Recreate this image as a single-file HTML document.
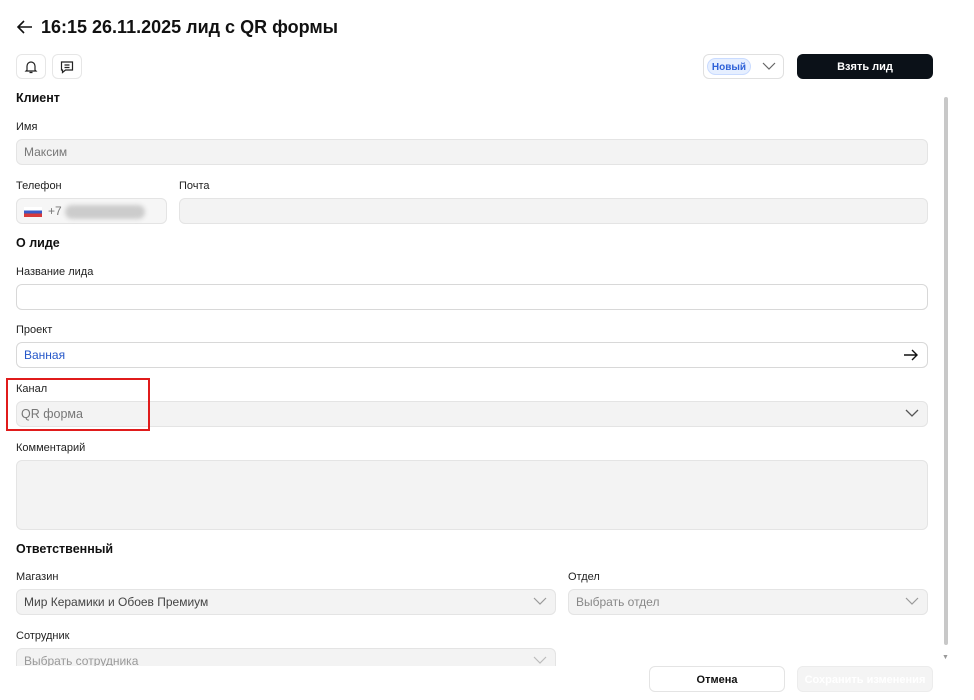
<!DOCTYPE html>
<html><head><meta charset="utf-8"><style>
*{box-sizing:border-box;margin:0;padding:0}
body{width:974px;height:700px;overflow:hidden;background:#fff;font-family:"Liberation Sans",sans-serif;color:#111;position:relative}
.a{position:absolute}
.lbl{position:absolute;font-size:11px;color:#222}
.h{position:absolute;font-size:12.5px;font-weight:bold;color:#111}
.in{position:absolute;height:26px;border:1px solid #e4e4e4;border-radius:6px;background:#f3f3f3;font-size:12px;color:#777;padding:0 7px;line-height:24px}
.w{background:#fff;border-color:#d8d8d8}
.chev{position:absolute;right:8px;top:6px}
</style></head><body>
<svg class="a" style="left:16px;top:19px" width="18" height="16" viewBox="0 0 18 16"><path d="M16 8H2M8 2L2 8l6 6" fill="none" stroke="#111" stroke-width="1.6"/></svg>
<div class="a" style="left:41px;top:17px;font-size:18px;font-weight:bold">16:15 26.11.2025 лид с QR формы</div>
<div class="a" style="left:16px;top:54px;width:30px;height:25px;border:1px solid #e6e6e6;border-radius:6px"></div>
<svg class="a" style="left:23px;top:59px" width="16" height="16" viewBox="0 0 16 16"><path d="M4 11V7a4 4 0 0 1 8 0v4l1 1H3z M6.5 13.5h3" fill="none" stroke="#222" stroke-width="1.2"/></svg>
<div class="a" style="left:52px;top:54px;width:30px;height:25px;border:1px solid #e6e6e6;border-radius:6px"></div>
<svg class="a" style="left:59px;top:59px" width="16" height="16" viewBox="0 0 16 16"><path d="M2.5 3h11v8h-7l-3 2.5V11h-1z M5.5 6h5M5.5 8.5h5" fill="none" stroke="#222" stroke-width="1.2"/></svg>
<div class="a" style="left:703px;top:54px;width:81px;height:25px;border:1px solid #e0e0e0;border-radius:6px"></div>
<div class="a" style="left:707px;top:58px;width:44px;height:17px;border-radius:9px;background:#e6efff;border:1px solid #c9dbff;color:#2f62d8;font-size:10px;font-weight:bold;text-align:center;line-height:17px">Новый</div>
<svg class="a" style="left:762px;top:61px" width="14" height="10" viewBox="0 0 14 10"><path d="M1 2l6 6 6-6" fill="none" stroke="#666" stroke-width="1.2"/></svg>
<div class="a" style="left:797px;top:54px;width:136px;height:25px;border-radius:6px;background:#0b1118;color:#fff;font-size:11px;font-weight:bold;text-align:center;line-height:27px">Взять лид</div>
<div class="h" style="left:16px;top:91px">Клиент</div>
<div class="lbl" style="left:16px;top:121px">Имя</div>
<div class="in" style="left:16px;top:139px;width:912px">Максим</div>
<div class="lbl" style="left:16px;top:180px">Телефон</div>
<div class="lbl" style="left:179px;top:180px">Почта</div>
<div class="in" style="left:16px;top:198px;width:151px;background:#f6f6f6"><span style="display:inline-block;width:18px;height:10px;vertical-align:middle;margin-right:6px;background:linear-gradient(#fff 33%,#3a5bc7 33% 66%,#d83a3a 66%)"></span>+7 <span style="display:inline-block;width:80px;height:14px;border-radius:7px;background:#ccc;vertical-align:middle;filter:blur(2px)"></span></div>
<div class="in" style="left:179px;top:198px;width:749px"></div>
<div class="h" style="left:16px;top:236px">О лиде</div>
<div class="lbl" style="left:16px;top:266px">Название лида</div>
<div class="in w" style="left:16px;top:284px;width:912px"></div>
<div class="lbl" style="left:16px;top:324px">Проект</div>
<div class="in w" style="left:16px;top:342px;width:912px;color:#2557c9">Ванная<svg class="chev" style="top:5px" width="16" height="14" viewBox="0 0 16 14"><path d="M1 7h13M9 2l5 5-5 5" fill="none" stroke="#111" stroke-width="1.4"/></svg></div>
<div class="lbl" style="left:16px;top:383px">Канал</div>
<div class="in" style="left:16px;top:401px;width:912px;font-size:12.5px;padding-left:4px">QR форма<svg class="chev" width="14" height="10" viewBox="0 0 14 10"><path d="M1 2l6 6 6-6" fill="none" stroke="#555" stroke-width="1.3"/></svg></div>
<div class="a" style="left:6px;top:378px;width:144px;height:53px;border:2px solid #e01b1b"></div>
<div class="lbl" style="left:16px;top:442px">Комментарий</div>
<div class="in" style="left:16px;top:460px;width:912px;height:70px"></div>
<div class="h" style="left:16px;top:542px">Ответственный</div>
<div class="lbl" style="left:16px;top:571px">Магазин</div>
<div class="lbl" style="left:568px;top:571px">Отдел</div>
<div class="in" style="left:16px;top:589px;width:540px;color:#444">Мир Керамики и Обоев Премиум<svg class="chev" width="14" height="10" viewBox="0 0 14 10"><path d="M1 2l6 6 6-6" fill="none" stroke="#999" stroke-width="1.2"/></svg></div>
<div class="in" style="left:568px;top:589px;width:360px;color:#888">Выбрать отдел<svg class="chev" width="14" height="10" viewBox="0 0 14 10"><path d="M1 2l6 6 6-6" fill="none" stroke="#999" stroke-width="1.2"/></svg></div>
<div class="lbl" style="left:16px;top:630px">Сотрудник</div>
<div class="a" style="left:16px;top:648px;width:540px;height:18px;overflow:hidden"><div class="in" style="left:0;top:0;width:540px;color:#999">Выбрать сотрудника<svg class="chev" width="14" height="10" viewBox="0 0 14 10"><path d="M1 2l6 6 6-6" fill="none" stroke="#bbb" stroke-width="1.2"/></svg></div></div>
<div class="a" style="left:944px;top:97px;width:4px;height:548px;background:#c8c8c8;border-radius:2px"></div>
<div class="a" style="left:942px;top:654px;font-size:7px;color:#999">▼</div>
<div class="a" style="left:649px;top:666px;width:136px;height:26px;border:1px solid #e4e4e4;border-radius:6px;font-size:11px;font-weight:bold;text-align:center;line-height:26px">Отмена</div>
<div class="a" style="left:797px;top:666px;width:136px;height:26px;border:1px solid #ececec;border-radius:6px;background:#f4f4f4;color:#fff;font-size:11px;font-weight:bold;text-align:center;line-height:26px">Сохранить изменения</div>
</body></html>
